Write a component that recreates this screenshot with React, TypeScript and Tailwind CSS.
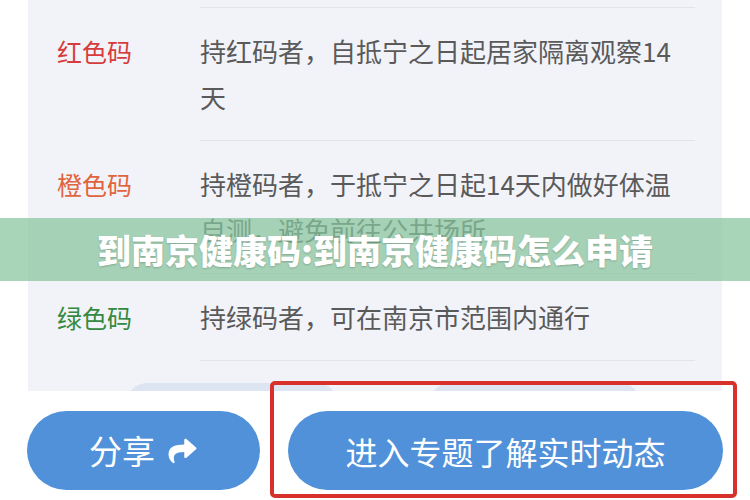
import React from 'react';
import { FaShare } from 'react-icons/fa';

interface CodeRow {
  label: string;
  color: string;
  text: string;
}

const rows: CodeRow[] = [
  { label: '红色码', color: 'text-[#d63c3c]', text: '持红码者，自抵宁之日起居家隔离观察14天' },
  { label: '橙色码', color: 'text-[#e0653f]', text: '持橙码者，于抵宁之日起14天内做好体温自测，避免前往公共场所' },
  { label: '绿色码', color: 'text-[#348a41]', text: '持绿码者，可在南京市范围内通行' },
];

export default function App() {
  return (
    <div className="relative w-[750px] h-[500px] overflow-hidden bg-white font-['Noto_Sans_CJK_SC','Noto_Sans',sans-serif]">
      {/* info card, its top is cut off */}
      <div className="ml-[28px] w-[694px] h-[391px] overflow-hidden bg-[#f2f3f9] pt-[7px] pl-[29px]">
        {rows.map((row, index) => (
          <div key={row.label} className="flex">
            <div className={`w-[143px] shrink-0 pt-[21px] pb-[20px] text-[25px] leading-[46px] ${row.color}`}>
              {row.label}
            </div>
            <div
              className={`w-[495px] border-t border-[#e3e4ea] py-[20px] text-[26px] leading-[46px] text-[#5a5a5a] ${
                index === rows.length - 1 ? 'border-b' : ''
              }`}
            >
              {row.text}
            </div>
          </div>
        ))}
        <div className="flex gap-[93px] pt-[22px] pl-[70px]">
          <div className="w-[210px] h-[40px] rounded-full bg-[#dce5f1]" />
          <div className="w-[210px] h-[40px] rounded-full bg-[#dce5f1]" />
        </div>
      </div>

      {/* bottom buttons */}
      <div className="flex gap-[28px] pl-[27px] mt-[20px]">
        <button className="w-[233px] h-[79px] rounded-full bg-[#5091da] text-white text-[33px] flex items-center justify-center gap-[12px]">
          <span>分享</span>
          <FaShare className="w-[31px] h-[28px]" />
        </button>
        <button className="w-[435px] h-[79px] rounded-full bg-[#5091da] text-white text-[32px] flex items-center justify-center">
          进入专题了解实时动态
        </button>
      </div>

      {/* annotation box */}
      <div className="absolute left-[270px] top-[381px] w-[467px] h-[117px] border-[4px] border-[#d8312b] rounded-[5px]" />

      {/* watermark banner */}
      <div className="absolute left-0 right-0 top-[218px] h-[63px] bg-[rgba(135,196,155,0.72)] flex items-center justify-center">
        <span className="text-white text-[34px] font-black [text-shadow:0_1px_2px_rgba(0,0,0,0.2)]">
          到南京健康码:到南京健康码怎么申请
        </span>
      </div>
    </div>
  );
}
